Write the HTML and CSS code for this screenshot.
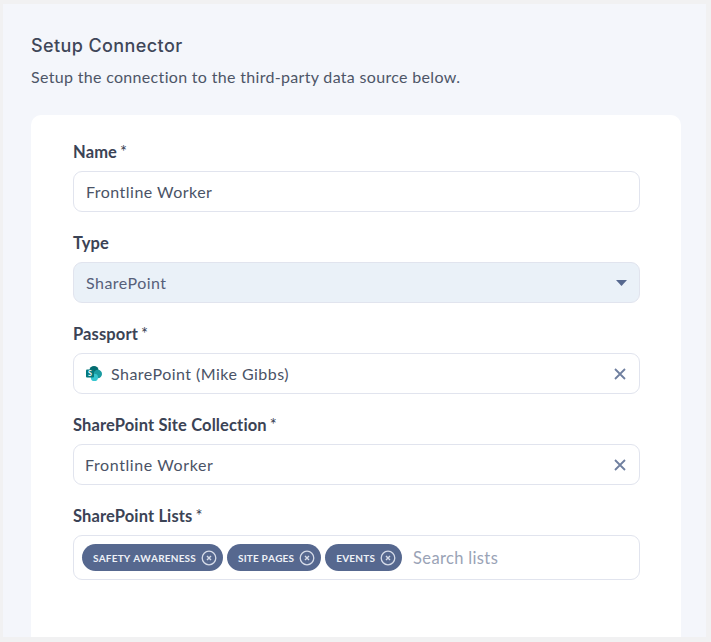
FILE: index.html
```html
<!DOCTYPE html>
<html lang="en">
<head>
<meta charset="utf-8">
<title>Setup Connector</title>
<link rel="stylesheet" href="styles.css">
</head>
<body>
<main class="panel">
  <h1 class="title">Setup Connector</h1>
  <p class="desc">Setup the connection to the third-party data source below.</p>
  <section class="card">
    <div class="field">
      <label class="label">Name<span class="req">*</span></label>
      <div class="input"><span class="value">Frontline Worker</span></div>
    </div>
    <div class="field">
      <label class="label">Type</label>
      <div class="input input-select">
        <span class="value">SharePoint</span>
        <svg class="caret" width="11" height="6" viewBox="0 0 11 6"><path d="M0 0h11L5.5 6z" fill="#56688f"/></svg>
      </div>
    </div>
    <div class="field">
      <label class="label">Passport<span class="req">*</span></label>
      <div class="input">
        <span class="with-icon">
          <svg class="sp-icon" width="17" height="17" viewBox="0 0 17 17">
            <circle cx="8" cy="5.6" r="4.6" fill="#036c70"/>
            <circle cx="11.8" cy="9" r="4.2" fill="#1a9ba1"/>
            <circle cx="8.4" cy="12.4" r="3.6" fill="#37c6d0"/>
            <rect x="0" y="4.5" width="8" height="8" rx="1" fill="#03787c"/>
            <text x="4" y="11" class="sp-letter">S</text>
          </svg>
          <span class="value">SharePoint (Mike Gibbs)</span>
        </span>
        <svg class="clear" width="12" height="12" viewBox="0 0 12 12"><path d="M1 1l10 10M11 1L1 11" stroke="#6f7f9f" stroke-width="1.8" fill="none"/></svg>
      </div>
    </div>
    <div class="field">
      <label class="label">SharePoint Site Collection<span class="req">*</span></label>
      <div class="input input-site">
        <span class="value">Frontline Worker</span>
        <svg class="clear" width="12" height="12" viewBox="0 0 12 12"><path d="M1 1l10 10M11 1L1 11" stroke="#6f7f9f" stroke-width="1.8" fill="none"/></svg>
      </div>
    </div>
    <div class="field">
      <label class="label">SharePoint Lists<span class="req">*</span></label>
      <div class="input input-tags">
        <span class="tag">SAFETY AWARENESS
          <svg class="tag-x" width="16" height="16" viewBox="0 0 16 16"><circle cx="8" cy="8" r="6.8" fill="none" stroke="#d5dbe8" stroke-width="1.3"/><path d="M6 6l4 4M10 6l-4 4" stroke="#d5dbe8" stroke-width="1.4"/></svg>
        </span>
        <span class="tag">SITE PAGES
          <svg class="tag-x" width="16" height="16" viewBox="0 0 16 16"><circle cx="8" cy="8" r="6.8" fill="none" stroke="#d5dbe8" stroke-width="1.3"/><path d="M6 6l4 4M10 6l-4 4" stroke="#d5dbe8" stroke-width="1.4"/></svg>
        </span>
        <span class="tag">EVENTS
          <svg class="tag-x" width="16" height="16" viewBox="0 0 16 16"><circle cx="8" cy="8" r="6.8" fill="none" stroke="#d5dbe8" stroke-width="1.3"/><path d="M6 6l4 4M10 6l-4 4" stroke="#d5dbe8" stroke-width="1.4"/></svg>
        </span>
        <span class="placeholder">Search lists</span>
      </div>
    </div>
  </section>
</main>
</body>
</html>
```
FILE: styles.css
```css
* { box-sizing: border-box; }
html, body { height: 100%; }
body {
  margin: 0;
  background: #f1f1f2;
  font-family: "Lato", "Open Sans", sans-serif;
  color: #424b5e;
  padding: 4px 5px 5px 3px;
  overflow: hidden;
}
.panel {
  height: 633px;
  background: #f4f6fb;
  padding: 31px 25px 0 28px;
  display: flex;
  flex-direction: column;
}
.title {
  margin: 0;
  font-family: "Inter", "Lato", sans-serif;
  font-size: 18px;
  line-height: 22px;
  font-weight: 500;
  letter-spacing: 0.4px;
  color: #3f4759;
}
.desc {
  margin: 9px 0 0;
  font-size: 16px;
  line-height: 22px;
  letter-spacing: 0.32px;
  color: #4d5567;
}
.card {
  margin-top: 27px;
  flex: 1;
  background: #fff;
  border-radius: 10px 10px 0 0;
  padding: 25px 41px 0 42px;
  display: flex;
  flex-direction: column;
  gap: 19px;
}
.field { display: flex; flex-direction: column; gap: 7px; }
.label {
  font-size: 16.5px;
  line-height: 24px;
  font-weight: 700;
  color: #3b4355;
  letter-spacing: 0.13px;
}
.req { margin-left: 3px; font-weight: 400; }
.input {
  height: 41px;
  border: 1px solid #e1e4ee;
  border-radius: 9px;
  background: #fff;
  display: flex;
  align-items: center;
  justify-content: space-between;
  padding: 0 13px 0 12px;
  font-size: 16px;
  letter-spacing: 0.47px;
  color: #4a5366;
}
.input-select { background: #eaf1f8; color: #56607a; padding-right: 12px; }
.input-site { padding-left: 11px; letter-spacing: 0.6px; }
.with-icon { display: flex; align-items: center; gap: 8px; }
.sp-icon { flex: none; }
.sp-letter { font: 700 7px "Lato", sans-serif; fill: #fff; text-anchor: middle; letter-spacing: 0; }
.input-tags {
  height: 45px;
  justify-content: flex-start;
  gap: 4px;
  padding: 0 8px;
}
.tag {
  height: 27px;
  border-radius: 14px;
  background: #56688f;
  color: #eef1f7;
  font-size: 10px;
  font-weight: 700;
  letter-spacing: 0.2px;
  font-kerning: none;
  display: inline-flex;
  align-items: center;
  gap: 5px;
  padding: 0 6px 0 11px;
  white-space: nowrap;
}
.tag-x { flex: none; }
.placeholder { margin-left: 7px; color: #9aa3b6; font-size: 16.5px; letter-spacing: 0.35px; }
```
